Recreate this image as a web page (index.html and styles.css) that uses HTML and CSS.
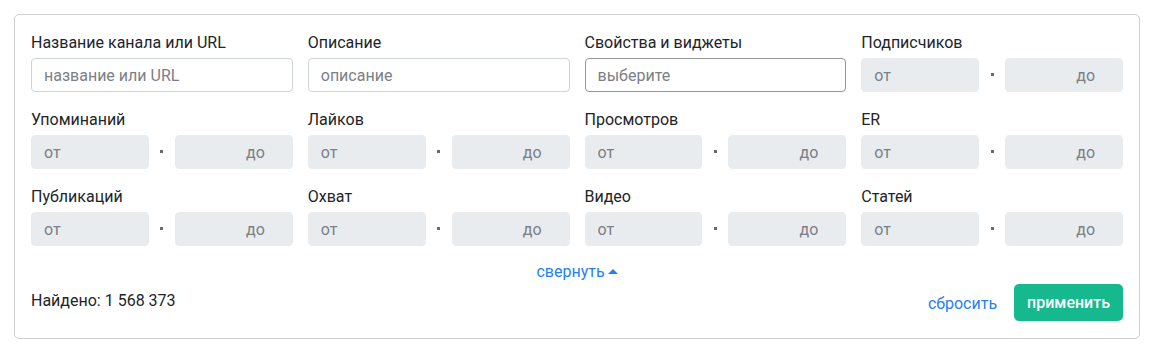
FILE: index.html
```html
<!DOCTYPE html>
<html lang="ru">
<head>
    <meta charset="UTF-8">
    <meta name="viewport" content="width=device-width, initial-scale=1.0">
    <title>Фильтр каналов</title>
    <link rel="stylesheet" href="styles.css">
</head>
<body>
    <div class="page">
        <form class="filter" action="#" method="get">
            <div class="grid">
                <div class="field">
                    <label for="name">Название канала или URL</label>
                    <input type="text" id="name" class="text" placeholder="название или URL">
                </div>
                <div class="field">
                    <label for="descr">Описание</label>
                    <input type="text" id="descr" class="text" placeholder="описание">
                </div>
                <div class="field">
                    <label for="props">Свойства и виджеты</label>
                    <input type="text" id="props" class="text select" placeholder="выберите">
                </div>
                <div class="field">
                    <label>Подписчиков</label>
                    <div class="range">
                        <input type="text" class="from" placeholder="от">
                        <span class="dot"></span>
                        <input type="text" class="to" placeholder="до">
                    </div>
                </div>

                <div class="field">
                    <label>Упоминаний</label>
                    <div class="range">
                        <input type="text" class="from" placeholder="от">
                        <span class="dot"></span>
                        <input type="text" class="to" placeholder="до">
                    </div>
                </div>
                <div class="field">
                    <label>Лайков</label>
                    <div class="range">
                        <input type="text" class="from" placeholder="от">
                        <span class="dot"></span>
                        <input type="text" class="to" placeholder="до">
                    </div>
                </div>
                <div class="field">
                    <label>Просмотров</label>
                    <div class="range">
                        <input type="text" class="from" placeholder="от">
                        <span class="dot"></span>
                        <input type="text" class="to" placeholder="до">
                    </div>
                </div>
                <div class="field">
                    <label>ER</label>
                    <div class="range">
                        <input type="text" class="from" placeholder="от">
                        <span class="dot"></span>
                        <input type="text" class="to" placeholder="до">
                    </div>
                </div>

                <div class="field">
                    <label>Публикаций</label>
                    <div class="range">
                        <input type="text" class="from" placeholder="от">
                        <span class="dot"></span>
                        <input type="text" class="to" placeholder="до">
                    </div>
                </div>
                <div class="field">
                    <label>Охват</label>
                    <div class="range">
                        <input type="text" class="from" placeholder="от">
                        <span class="dot"></span>
                        <input type="text" class="to" placeholder="до">
                    </div>
                </div>
                <div class="field">
                    <label>Видео</label>
                    <div class="range">
                        <input type="text" class="from" placeholder="от">
                        <span class="dot"></span>
                        <input type="text" class="to" placeholder="до">
                    </div>
                </div>
                <div class="field">
                    <label>Статей</label>
                    <div class="range">
                        <input type="text" class="from" placeholder="от">
                        <span class="dot"></span>
                        <input type="text" class="to" placeholder="до">
                    </div>
                </div>
            </div>

            <div class="toggle">
                <a href="#" class="collapse">свернуть <span class="caret"></span></a>
            </div>

            <div class="footer">
                <span class="found">Найдено: 1 568 373</span>
                <div class="actions">
                    <a href="#" class="reset">сбросить</a>
                    <button type="submit" class="apply">применить</button>
                </div>
            </div>
        </form>
    </div>
</body>
</html>
```
FILE: styles.css
```css
body {
    margin: 0;
    font-family: Roboto, "Liberation Sans", Arial, sans-serif;
    font-size: 16px;
    color: #212529;
    background-color: #fff;
}

.page {
    padding: 14px 10px 10px 14px;
}

.filter {
    border: 1px solid #cfcfcf;
    border-radius: 5px;
    padding: 16px 16px 17px 16px;
}

.grid {
    display: grid;
    grid-template-columns: repeat(4, minmax(0, 1fr));
    column-gap: 15px;
    row-gap: 16px;
}

.field label {
    display: block;
    line-height: 24px;
    margin-bottom: 3px;
}

input[type="text"] {
    box-sizing: border-box;
    width: 100%;
    height: 34px;
    padding: 0 12px;
    font-family: inherit;
    font-size: 16px;
    color: #495057;
    border: 1px solid #ced4da;
    border-radius: 4px;
    background-color: #fff;
    outline: none;
}

input::placeholder {
    color: #7b8087;
}

input.select {
    border-color: #959595;
}

.range {
    display: grid;
    grid-template-columns: minmax(0, 1fr) 26px minmax(0, 1fr);
    align-items: center;
}

.range input[type="text"] {
    background-color: #e9ecef;
    border-color: #e9ecef;
}

.range input.to {
    text-align: right;
    padding-right: 27px;
}

.dot {
    justify-self: center;
    width: 3px;
    height: 3px;
    background-color: #6a6a6a;
    position: relative;
    top: -1px;
}

.toggle {
    text-align: center;
    margin-top: 17px;
    line-height: 18px;
}

.collapse {
    color: #2680f0;
    text-decoration: none;
}

.caret {
    display: inline-block;
    width: 0;
    height: 0;
    border-left: 5px solid transparent;
    border-right: 5px solid transparent;
    border-bottom: 5px solid #2680f0;
    vertical-align: 3px;
    margin-left: -1px;
}

.footer {
    display: flex;
    justify-content: space-between;
    align-items: center;
    margin-top: 3px;
}

.found {
    position: relative;
    top: -2px;
}

.actions {
    display: flex;
    align-items: center;
}

.reset {
    color: #2680f0;
    text-decoration: none;
    margin-right: 17px;
    margin-top: 1px;
}

.apply {
    height: 37px;
    padding: 0 13px;
    border: none;
    border-radius: 5px;
    background-color: #16b88e;
    color: #fff;
    font-family: inherit;
    font-size: 16px;
    font-weight: 500;
    cursor: pointer;
}
```
